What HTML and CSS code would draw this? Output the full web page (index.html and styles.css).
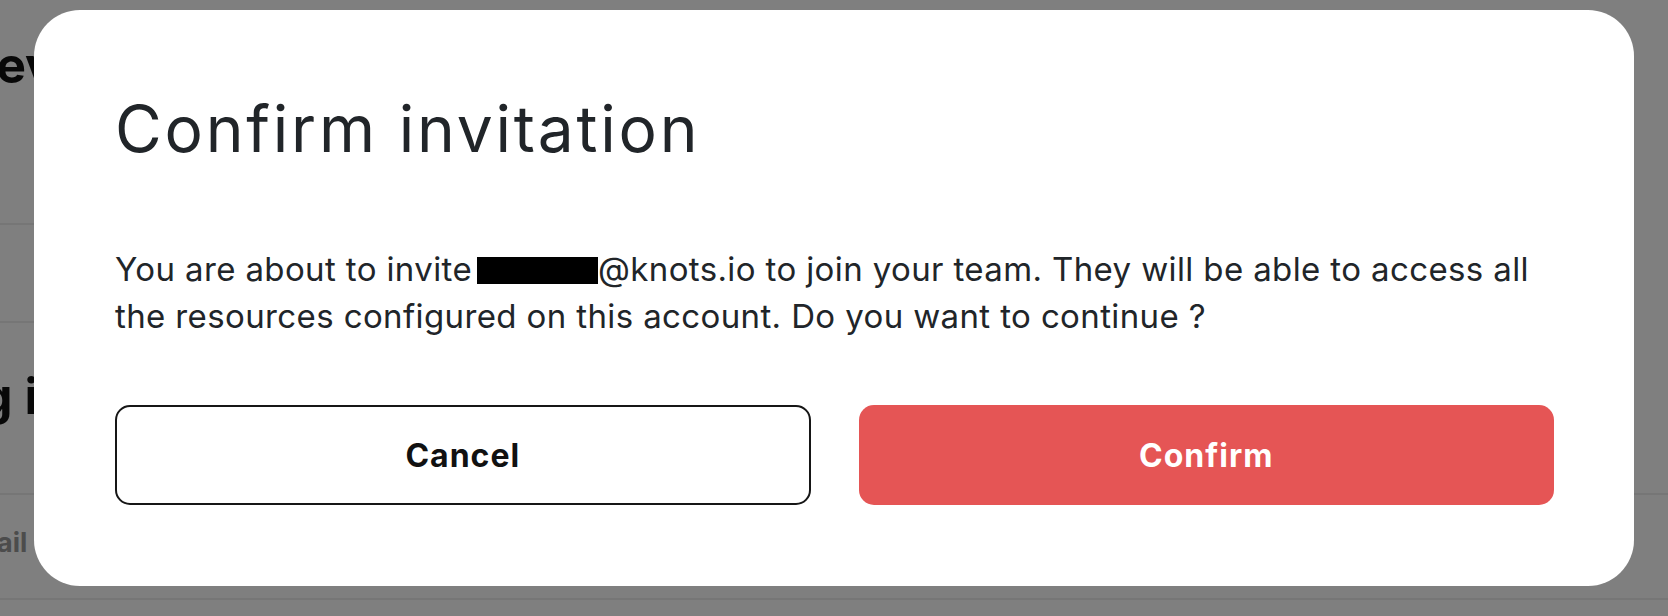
FILE: index.html
```html
<!DOCTYPE html>
<html lang="en">
<head>
<meta charset="utf-8">
<title>Confirm invitation</title>
<link rel="stylesheet" href="styles.css">
</head>
<body>
<div class="page">
  <h2 class="page-title">Review team</h2>
  <div class="page-row page-row-first"></div>
  <div class="page-row"></div>
  <h2 class="page-section">Pending invitations</h2>
  <div class="page-table">
    <div class="table-head">Email</div>
  </div>
</div>

<div class="overlay">
  <div class="modal" role="dialog" aria-labelledby="modal-title">
    <h1 class="modal-title" id="modal-title">Confirm invitation</h1>
    <p class="modal-text">You are about to invite<span class="redacted"></span>@knots.io to join your team. They will be able to access all the resources configured on this account. Do you want to continue ?</p>
    <div class="modal-actions">
      <button class="btn btn-outline" type="button">Cancel</button>
      <button class="btn btn-primary" type="button">Confirm</button>
    </div>
  </div>
</div>
</body>
</html>
```

FILE: styles.css
```css
* {
  box-sizing: border-box;
}

html, body {
  margin: 0;
  padding: 0;
}

body {
  width: 1668px;
  height: 616px;
  overflow: hidden;
  background: #ffffff;
  font-family: Inter, "Liberation Sans", sans-serif;
  color: #212529;
}

/* background page (under the overlay) */
.page {
  padding-top: 40px;
}

.page-title {
  margin: 0 0 0 -36px;
  font-size: 50px;
  font-weight: 700;
  line-height: 50px;
  color: #111;
  white-space: nowrap;
}

.page-row {
  width: 1600px;
  height: 98px;
  border-bottom: 2px solid #ececec;
}

.page-row-first {
  height: 135px;
}

.page-section {
  margin: 48px 0 0 -188px;
  font-size: 50px;
  font-weight: 700;
  line-height: 50px;
  color: #111;
  white-space: nowrap;
}

.page-table {
  margin-top: 72px;
  border-top: 2px solid #ececec;
  border-bottom: 2px solid #ececec;
  height: 107px;
}

.table-head {
  margin-left: -44px;
  padding-top: 33px;
  font-size: 27px;
  font-weight: 700;
  line-height: 30px;
  color: #999999;
}

/* overlay + modal */
.overlay {
  position: fixed;
  inset: 0;
  background: rgba(0, 0, 0, 0.5);
  display: flex;
  justify-content: center;
  align-items: flex-start;
  padding-top: 10px;
}

.modal {
  width: 1600px;
  height: 576px;
  background: #ffffff;
  border-radius: 46px;
  padding: 80px 80px 81px 81px;
  display: flex;
  flex-direction: column;
}

.modal-title {
  margin: 0;
  font-size: 64px;
  font-weight: 400;
  line-height: 77px;
  color: #212529;
  letter-spacing: 2.8px;
}

.modal-text {
  margin: 79px 0 0 0;
  font-size: 33px;
  line-height: 47px;
  color: #212529;
  letter-spacing: 0.38px;
}

.redacted {
  display: inline-block;
  width: 121px;
  height: 27px;
  background: #000;
  vertical-align: -3px;
  margin-left: 5px;
}

.modal-actions {
  margin-top: auto;
  display: grid;
  grid-template-columns: 1fr 1fr;
  gap: 48px;
}

.btn {
  height: 100px;
  border-radius: 15px;
  font-family: Inter, "Liberation Sans", sans-serif;
  font-size: 32px;
  font-weight: 700;
  letter-spacing: 1px;
  cursor: pointer;
}

.btn-outline {
  background: #ffffff;
  border: 2px solid #161616;
  color: #111111;
}

.btn-primary {
  background: #e55555;
  border: none;
  color: #ffffff;
}
```
